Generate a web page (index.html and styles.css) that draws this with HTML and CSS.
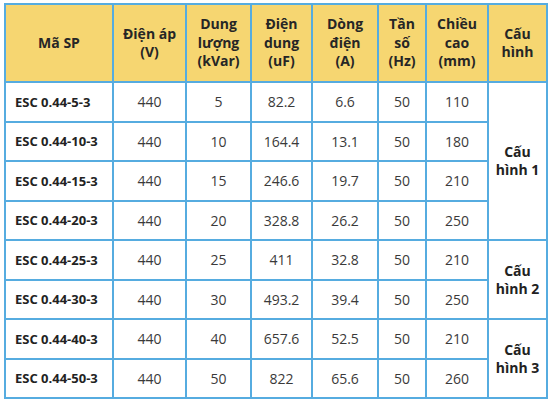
FILE: index.html
```html
<!DOCTYPE html>
<html lang="vi">
<head>
<meta charset="utf-8">
<link rel="stylesheet" href="styles.css">
</head>
<body>
<table class="spec">
  <colgroup>
    <col class="c1"><col class="c2"><col class="c3"><col class="c4"><col class="c5"><col class="c6"><col class="c7"><col class="c8">
  </colgroup>
  <thead>
    <tr>
      <th>Mã SP</th>
      <th>Điện áp<br>(V)</th>
      <th>Dung<br>lượng<br>(kVar)</th>
      <th>Điện<br>dung<br>(uF)</th>
      <th>Dòng<br>điện<br>(A)</th>
      <th>Tần<br>số<br>(Hz)</th>
      <th>Chiều<br>cao<br>(mm)</th>
      <th>Cấu<br>hình</th>
    </tr>
  </thead>
  <tbody>
    <tr><td class="code">ESC 0.44-5-3</td><td>440</td><td>5</td><td>82.2</td><td>6.6</td><td>50</td><td>110</td><td class="cfg" rowspan="4">Cấu<br>hình 1</td></tr>
    <tr><td class="code">ESC 0.44-10-3</td><td>440</td><td>10</td><td>164.4</td><td>13.1</td><td>50</td><td>180</td></tr>
    <tr><td class="code">ESC 0.44-15-3</td><td>440</td><td>15</td><td>246.6</td><td>19.7</td><td>50</td><td>210</td></tr>
    <tr><td class="code">ESC 0.44-20-3</td><td>440</td><td>20</td><td>328.8</td><td>26.2</td><td>50</td><td>250</td></tr>
    <tr><td class="code">ESC 0.44-25-3</td><td>440</td><td>25</td><td>411</td><td>32.8</td><td>50</td><td>210</td><td class="cfg" rowspan="2">Cấu<br>hình 2</td></tr>
    <tr><td class="code">ESC 0.44-30-3</td><td>440</td><td>30</td><td>493.2</td><td>39.4</td><td>50</td><td>250</td></tr>
    <tr><td class="code">ESC 0.44-40-3</td><td>440</td><td>40</td><td>657.6</td><td>52.5</td><td>50</td><td>210</td><td class="cfg" rowspan="2">Cấu<br>hình 3</td></tr>
    <tr><td class="code">ESC 0.44-50-3</td><td>440</td><td>50</td><td>822</td><td>65.6</td><td>50</td><td>260</td></tr>
  </tbody>
</table>
</body>
</html>
```
FILE: styles.css
```css
html, body {
  margin: 0;
  padding: 0;
  background: #ffffff;
}
body {
  padding: 3px 0 0 4px;
  font-family: "Open Sans", "Liberation Sans", sans-serif;
  color: #333333;
}
.spec {
  border-collapse: collapse;
  table-layout: fixed;
  width: 542px;
}
.c1 { width: 108px; }
.c2 { width: 73px; }
.c3 { width: 65px; }
.c4 { width: 61px; }
.c5 { width: 66px; }
.c6 { width: 48px; }
.c7 { width: 62px; }
.c8 { width: 59px; }
.spec th, .spec td {
  border: 2px solid #56ace0;
  text-align: center;
  vertical-align: middle;
  padding: 0;
}
.spec th {
  background: #f6d671;
  height: 76px;
  font-size: 14px;
  font-weight: 700;
  line-height: 18.5px;
  color: #262626;
}
.spec td {
  height: 37.5px;
  font-size: 14px;
  color: #3a3a3a;
}
.spec td.code {
  text-align: left;
  padding-left: 9px;
  font-weight: 700;
  font-size: 13px;
  color: #222222;
}
.spec td.cfg {
  font-weight: 700;
  font-size: 14px;
  line-height: 18px;
  color: #222222;
}
```
